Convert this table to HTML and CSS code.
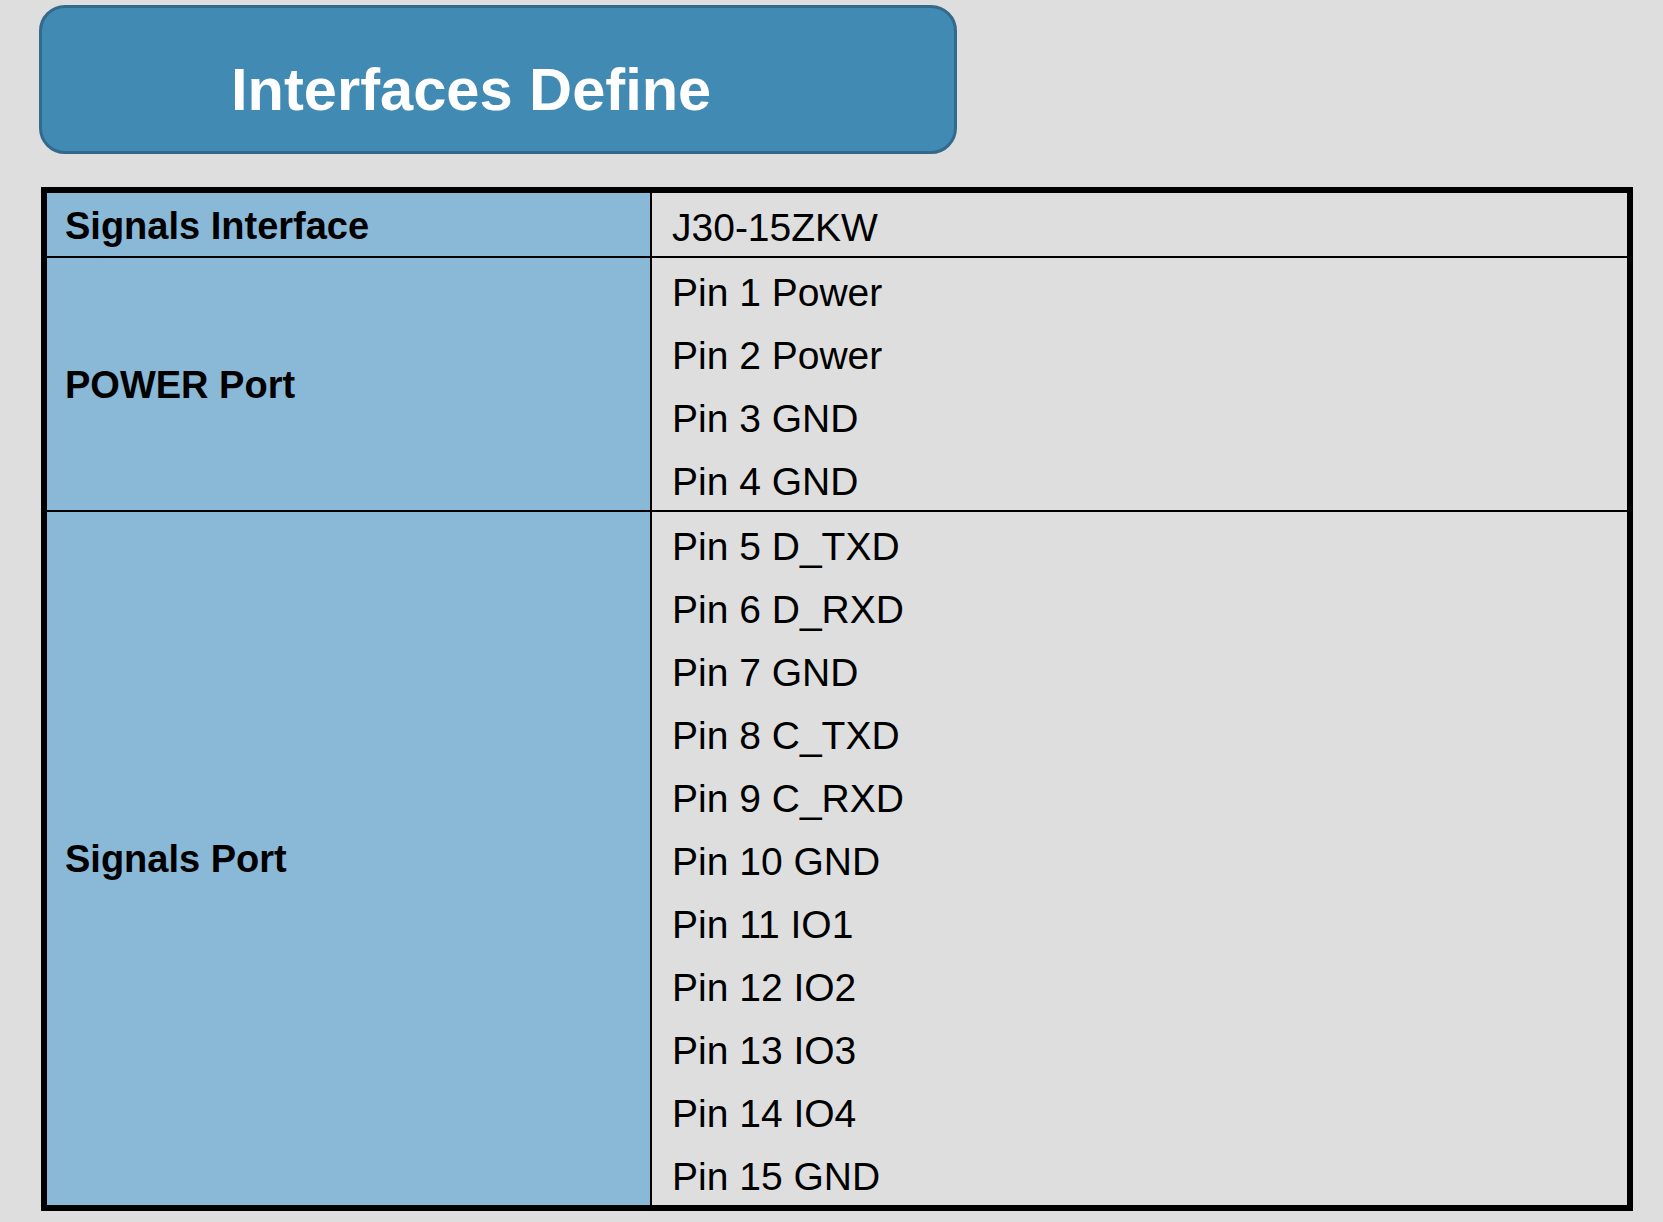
FILE: index.html
```html
<!DOCTYPE html>
<html>
<head>
<meta charset="utf-8">
<link rel="stylesheet" href="styles.css">
</head>
<body>
<div class="page">
  <div class="banner"><h1 class="banner-title">Interfaces Define</h1></div>
  <div class="table">
    <div class="cell head row1">Signals Interface</div>
    <div class="cell val row1"><div class="line">J30-15ZKW</div></div>
    <div class="cell head row2">POWER Port</div>
    <div class="cell val row2">
      <div class="line">Pin 1 Power</div>
      <div class="line">Pin 2 Power</div>
      <div class="line">Pin 3 GND</div>
      <div class="line">Pin 4 GND</div>
    </div>
    <div class="cell head row3">Signals Port</div>
    <div class="cell val row3">
      <div class="line">Pin 5 D_TXD</div>
      <div class="line">Pin 6 D_RXD</div>
      <div class="line">Pin 7 GND</div>
      <div class="line">Pin 8 C_TXD</div>
      <div class="line">Pin 9 C_RXD</div>
      <div class="line">Pin 10 GND</div>
      <div class="line">Pin 11 IO1</div>
      <div class="line">Pin 12 IO2</div>
      <div class="line">Pin 13 IO3</div>
      <div class="line">Pin 14 IO4</div>
      <div class="line">Pin 15 GND</div>
    </div>
  </div>
</div>
</body>
</html>
```
FILE: styles.css
```css
html, body {
  margin: 0;
  padding: 0;
  background: #dedede;
}
.page {
  width: 1663px;
  height: 1222px;
  box-sizing: border-box;
  padding: 5px 0 0 39px;
  font-family: "Liberation Sans", Arial, sans-serif;
  color: #000;
}
.banner {
  width: 918px;
  height: 149px;
  box-sizing: border-box;
  background: #418ab4;
  border: 3px solid #33698b;
  border-radius: 26px;
  display: flex;
  align-items: center;
  padding-left: 189px;
}
.banner-title {
  margin: 0;
  font-size: 59.6px;
  font-weight: bold;
  color: #fff;
  line-height: 1;
  padding-top: 20px;
}
.table {
  margin: 33px 0 0 2px;
  width: 1592px;
  box-sizing: border-box;
  border: 6px solid #000;
  display: grid;
  grid-template-columns: 603px 2px 975px;
  grid-template-rows: 63px 2px 252px 2px 693px;
  background: #000;
}
.cell {
  box-sizing: border-box;
}
.head {
  grid-column: 1;
  background: #8ab8d7;
  font-weight: bold;
  font-size: 38px;
  padding-left: 18px;
  display: flex;
  align-items: center;
}
.val {
  grid-column: 3;
  background: #dedede;
  font-size: 39px;
  padding: 3px 0 0 20px;
}
.row1 { grid-row: 1; }
.row2 { grid-row: 3; }
.row3 { grid-row: 5; }
.head.row1 { padding-top: 3px; }
.head.row2, .head.row3 { padding-top: 2px; }
.line {
  height: 63px;
  line-height: 63px;
  white-space: nowrap;
}
```
